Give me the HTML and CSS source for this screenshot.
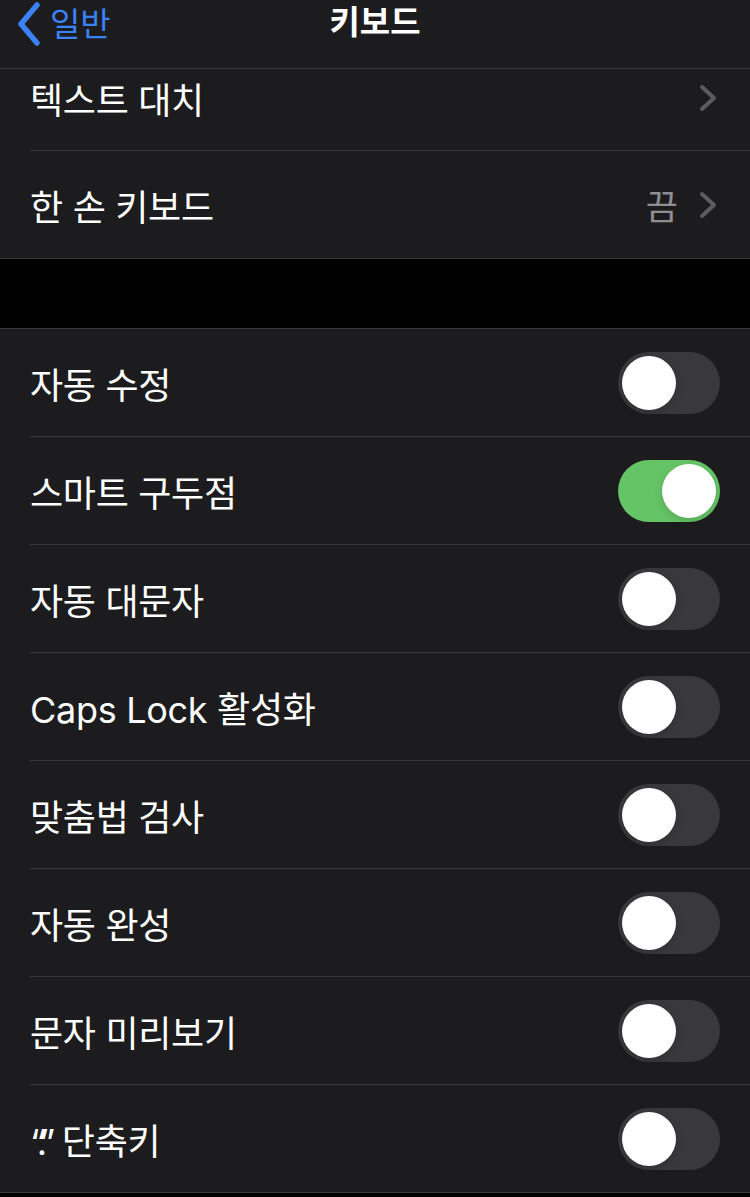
FILE: index.html
```html
<!DOCTYPE html>
<html lang="ko">
<head>
    <meta charset="UTF-8">
    <meta name="viewport" content="width=device-width, initial-scale=1.0">
    <title>키보드</title>
    <link rel="stylesheet" href="styles.css">
</head>
<body>

<header class="nav-bar">
    <a class="back" href="#">
        <svg class="back-icon" viewBox="0 0 26 44" width="26" height="44">
            <path d="M21 3 L5 22 L21 41" fill="none" stroke="#3a82f7" stroke-width="5.5" stroke-linecap="round" stroke-linejoin="round"/>
        </svg>
        <span>일반</span>
    </a>
    <h1 class="nav-title">키보드</h1>
</header>

<section class="group">
    <div class="row row-cut">
        <span class="label">텍스트 대치</span>
        <span class="detail">
            <svg class="chevron" viewBox="0 0 20 28" width="20" height="28"><path d="M4 3 L16 14 L4 25" fill="none" stroke="#5b5b60" stroke-width="4" stroke-linecap="round" stroke-linejoin="round"/></svg>
        </span>
    </div>
    <div class="row">
        <span class="label">한 손 키보드</span>
        <span class="detail">
            <span class="value">끔</span>
            <svg class="chevron" viewBox="0 0 20 28" width="20" height="28"><path d="M4 3 L16 14 L4 25" fill="none" stroke="#5b5b60" stroke-width="4" stroke-linecap="round" stroke-linejoin="round"/></svg>
        </span>
    </div>
</section>

<div class="gap"></div>

<section class="group">
    <div class="row">
        <span class="label">자동 수정</span>
        <span class="switch"><span class="knob"></span></span>
    </div>
    <div class="row">
        <span class="label">스마트 구두점</span>
        <span class="switch on"><span class="knob"></span></span>
    </div>
    <div class="row">
        <span class="label">자동 대문자</span>
        <span class="switch"><span class="knob"></span></span>
    </div>
    <div class="row">
        <span class="label">Caps Lock 활성화</span>
        <span class="switch"><span class="knob"></span></span>
    </div>
    <div class="row">
        <span class="label">맞춤법 검사</span>
        <span class="switch"><span class="knob"></span></span>
    </div>
    <div class="row">
        <span class="label">자동 완성</span>
        <span class="switch"><span class="knob"></span></span>
    </div>
    <div class="row">
        <span class="label">문자 미리보기</span>
        <span class="switch"><span class="knob"></span></span>
    </div>
    <div class="row">
        <span class="label"><span class="quote">“.”</span> 단축키</span>
        <span class="switch"><span class="knob"></span></span>
    </div>
</section>

</body>
</html>
```

FILE: styles.css
```css
body {
    margin: 0;
    background: #000;
    color: #fff;
    font-family: "Inter", "Noto Sans CJK KR", sans-serif;
    overflow: hidden;
}
.nav-bar {
    height: 69px;
    background: #1c1c1e;
    border-bottom: 1px solid #3a3a3c;
    box-sizing: border-box;
    display: flex;
    align-items: flex-start;
    justify-content: center;
    position: relative;
}
.back {
    position: absolute;
    left: 16px;
    top: 2px;
    display: flex;
    align-items: center;
    gap: 8px;
    color: #3a82f7;
    text-decoration: none;
    font-size: 33px;
    line-height: 44px;
}
.nav-title {
    margin: 0;
    font-size: 33px;
    font-weight: 600;
    line-height: 44px;
}
.group {
    background: #1c1c1e;
    border-top: 1px solid #3a3a3c;
    border-bottom: 1px solid #3a3a3c;
}
.group:first-of-type {
    border-top: none;
}
.row {
    height: 108px;
    margin-left: 30px;
    padding-right: 30px;
    display: flex;
    align-items: center;
    justify-content: space-between;
    box-sizing: border-box;
    border-bottom: 1px solid #38383a;
}
.row:last-child {
    height: 107px;
    border-bottom: none;
}
.row-cut {
    height: 82px;
    padding-bottom: 24px;
}
.label {
    font-size: 36px;
    letter-spacing: -0.3px;
}
.quote {
    letter-spacing: -6px;
    margin-right: 3px;
}
.detail {
    display: flex;
    align-items: center;
    gap: 20px;
    margin-right: 2px;
}
.value {
    color: #8e8e93;
    font-size: 35px;
}
.gap {
    height: 69px;
}
.switch {
    width: 102px;
    height: 62px;
    border-radius: 31px;
    background: #39393d;
    display: flex;
    align-items: center;
    padding: 4px;
    box-sizing: border-box;
}
.switch.on {
    background: #65c466;
    justify-content: flex-end;
}
.knob {
    width: 54px;
    height: 54px;
    border-radius: 50%;
    background: #fff;
    box-shadow: 0 3px 8px rgba(0, 0, 0, 0.15);
}
```
